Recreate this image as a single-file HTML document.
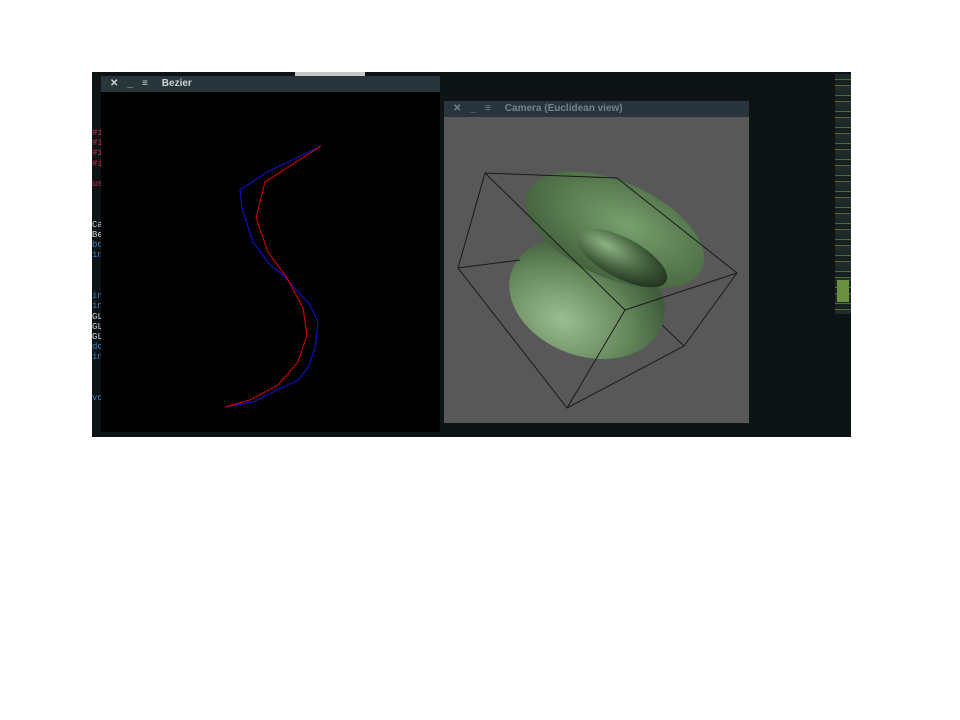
<!DOCTYPE html>
<html><head><style>
body{margin:0;width:960px;height:720px;background:#fff;position:relative;overflow:hidden;font-family:"Liberation Sans",sans-serif}
.shot{position:absolute;left:92px;top:72px;width:759px;height:365px;background:#0e1315}
.tab{position:absolute;left:295px;top:72px;width:70px;height:4px;background:#c8c8c8}
.tb{position:absolute;background:#28363b;color:#c8d4d6;font-size:10px;font-weight:bold;height:16px;line-height:16px}
.tb span{display:inline-block}
</style></head><body>
<div class="shot"></div>
<div class="tab"></div>
<div style="position:absolute;left:92px;top:128px;font:9px 'Liberation Mono',monospace;line-height:10.2px;color:#c03050">#i<br>#i<br>#i<br>#i<br><br>us<br><br><br><br><span style="color:#ccc">Ca<br>Be</span><br><span style="color:#3a80c0">bo<br>in</span><br><br><br><br><span style="color:#3a80c0">in<br>in</span><br><span style="color:#ccc">GL<br>GL<br>GL</span><br><span style="color:#3a80c0">do<br>in</span><br><br><br><br><span style="color:#3a80c0">vo</span></div>
<div style="position:absolute;left:835px;top:74px;width:16px;height:240px;background:repeating-linear-gradient(#1c2828 0 5px,#4a6a3a 5px 6px,#152020 6px 11px,#506a30 11px 12px,#222a30 12px 16px)"></div>
<div style="position:absolute;left:837px;top:280px;width:12px;height:22px;background:#6a9040"></div>
<div class="tb" style="left:101px;top:76px;width:339px"><span style="margin-left:9px">✕</span><span style="margin-left:9px">_</span><span style="margin-left:9px">≡</span><span style="margin-left:14px">Bezier</span></div>
<div style="position:absolute;left:101px;top:92px;width:339px;height:340px;background:#000"></div>
<svg style="position:absolute;left:0;top:0" width="960" height="720">
<polyline fill="none" stroke="#1010c0" stroke-width="1.2" points="321,146 267,172 240,190 242,208 253,242 270,265 283,275 310,305 318,322 315,348 308,368 298,380 277,390 253,402 225,407"/>
<polyline fill="none" stroke="#c00000" stroke-width="1.2" points="321,146 265,182 256,218 268,252 287,278 303,308 307,335 298,362 278,385 250,400 225,407"/>
</svg>
<div class="tb" style="left:444px;top:101px;width:305px;color:#70868c"><span style="margin-left:9px">✕</span><span style="margin-left:9px">_</span><span style="margin-left:9px">≡</span><span style="margin-left:14px">Camera (Euclidean view)</span></div>
<div style="position:absolute;left:444px;top:117px;width:305px;height:306px;background:#585858"></div>
<svg style="position:absolute;left:0;top:0" width="960" height="720">
<defs>
<radialGradient id="b" cx="0.4" cy="0.75" r="0.7"><stop offset="0" stop-color="#9cbc92"/><stop offset="0.6" stop-color="#66895c"/><stop offset="1" stop-color="#3f5c3a"/></radialGradient>
<radialGradient id="t" cx="0.55" cy="0.4" r="0.6"><stop offset="0" stop-color="#78a06e"/><stop offset="1" stop-color="#45643e"/></radialGradient>
<radialGradient id="h" cx="0.3" cy="0.4" r="0.8"><stop offset="0" stop-color="#8db282"/><stop offset="0.6" stop-color="#3e5a38"/><stop offset="1" stop-color="#1a2818"/></radialGradient>
</defs>
<ellipse cx="587" cy="298" rx="80" ry="58" transform="rotate(20 587 298)" fill="url(#b)"/>
<ellipse cx="615" cy="230" rx="95" ry="48" transform="rotate(24 615 230)" fill="url(#t)"/>
<ellipse cx="622" cy="258" rx="50" ry="20" transform="rotate(28 622 258)" fill="url(#h)"/>
<g stroke="#1a1a1a" stroke-width="1" fill="none">
<polyline points="617,178 485,173 458,268 567,408 684,346 737,273 617,178"/>
<line x1="485" y1="173" x2="625" y2="310"/>
<line x1="625" y1="310" x2="737" y2="273"/>
<line x1="625" y1="310" x2="567" y2="408"/>
<line x1="458" y1="268" x2="520" y2="260"/>
<line x1="684" y1="346" x2="662" y2="325"/>
</g>
</svg>
</body></html>
